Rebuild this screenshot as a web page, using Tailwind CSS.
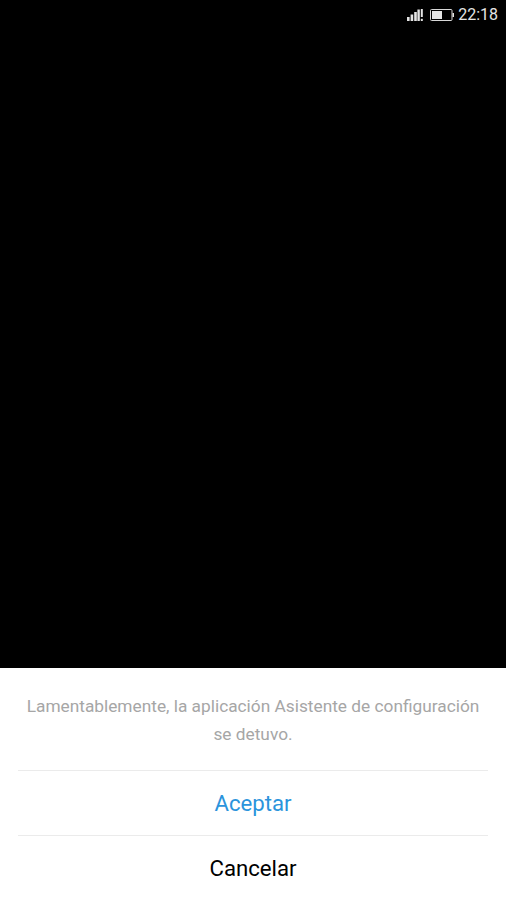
<!DOCTYPE html>
<html lang="es">
<head>
  <meta charset="UTF-8" />
  <title>Asistente de configuración</title>
  <meta name="viewport" content="width=device-width, initial-scale=1.0" />
  <script src="https://cdn.jsdelivr.net/npm/@tailwindcss/browser@4"></script>
</head>
<body class="bg-black font-['Roboto',sans-serif]">
  <div class="h-[900px] w-[506px] flex flex-col overflow-hidden">
    <!-- status bar -->
    <div class="h-[30px] flex items-center justify-end pr-[8px] text-[#e4e4e4]">
      <svg class="w-[16px] h-[14px] mr-[7px]" viewBox="0 0 16 14" fill="#e4e4e4">
        <rect x="0" y="9" width="2.6" height="4" />
        <rect x="3.6" y="6.5" width="2.6" height="6.5" />
        <rect x="7.2" y="4" width="2.6" height="9" />
        <rect x="10.4" y="1.5" width="2.4" height="11.5" />
        <rect x="13.8" y="1" width="2" height="8" />
        <rect x="13.8" y="10.8" width="2" height="2.2" />
      </svg>
      <svg class="w-[24px] h-[14px] mr-[4px]" viewBox="0 0 24 14" fill="none">
        <rect x="0.5" y="1.5" width="21.5" height="11" rx="1" stroke="#d8d8d8" />
        <rect x="2" y="3" width="10" height="8" fill="#e4e4e4" />
        <rect x="22.5" y="5" width="1.5" height="4" fill="#e4e4e4" />
      </svg>
      <span class="text-[16px] leading-none">22:18</span>
    </div>

    <div class="flex-1"></div>

    <!-- dialog -->
    <div class="bg-white h-[232px] px-[18px] flex flex-col">
      <p class="h-[102px] pt-[24px] text-center text-[17.3px] leading-[28px] text-[#a6a6a6]">
        Lamentablemente, la aplicación Asistente de configuración<br />se detuvo.
      </p>
      <div class="h-[65px] pt-[2px] flex items-center justify-center border-t border-[#ebebeb] text-[22.2px] text-[#2b94dc]">Aceptar</div>
      <div class="h-[65px] pt-[2px] flex items-center justify-center border-t border-[#ebebeb] text-[22.2px] text-black">Cancelar</div>
    </div>
  </div>
</body>
</html>
